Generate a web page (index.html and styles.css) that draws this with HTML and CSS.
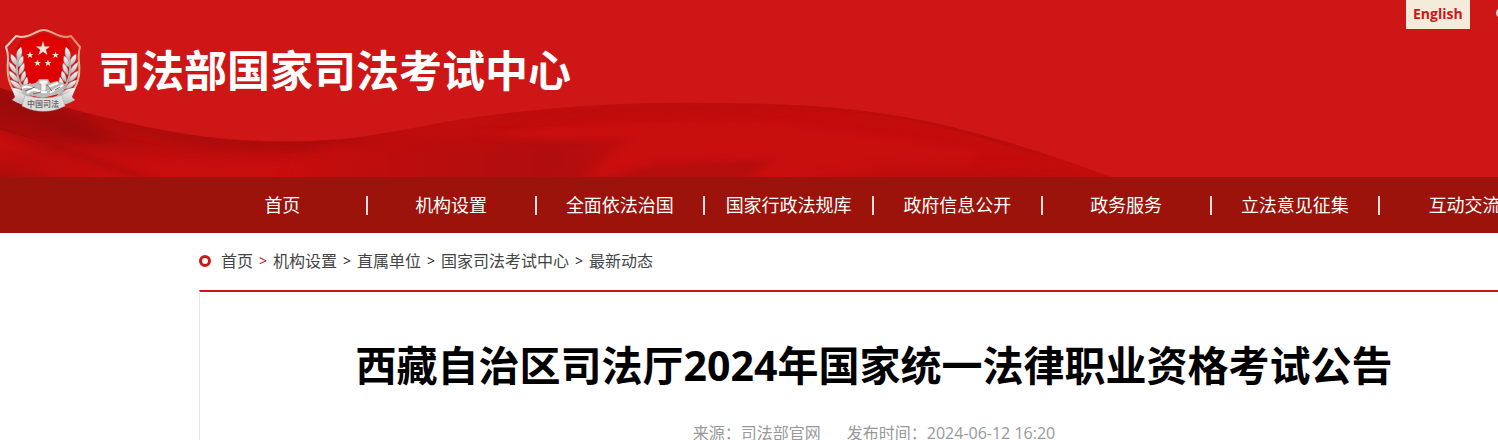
FILE: index.html
```html
<!DOCTYPE html>
<html lang="zh-CN">
  <head>
    <meta charset="UTF-8" />
    <meta name="viewport" content="width=device-width, initial-scale=1.0" />
    <title>西藏自治区司法厅2024年国家统一法律职业资格考试公告</title>
    <link rel="stylesheet" href="styles.css">
  </head>
  <body>
    <div class="page">
      <header class="header">
        <!-- ribbon background -->
        <svg class="header-bg" viewBox="0 0 1748 177" preserveAspectRatio="xMinYMax slice" aria-hidden="true">
          <defs>
            <linearGradient id="silk" gradientUnits="userSpaceOnUse" x1="0" y1="0" x2="1110" y2="0">
              <stop offset="0" stop-color="#a90c0c" />
              <stop offset="0.06" stop-color="#b40d0d" />
              <stop offset="0.16" stop-color="#bd0d0d" />
              <stop offset="0.28" stop-color="#b60d0d" />
              <stop offset="0.4" stop-color="#c00d0d" />
              <stop offset="0.55" stop-color="#c30c0c" />
              <stop offset="1" stop-color="#c40c0c" />
            </linearGradient>
            <linearGradient id="corner" x1="0" y1="0" x2="1" y2="0.5">
              <stop offset="0" stop-color="#cb0d0d" />
              <stop offset="0.4" stop-color="#bd0d0d" />
              <stop offset="1" stop-color="#c90d0d" />
            </linearGradient>
            <linearGradient id="fold" x1="0" y1="0" x2="1" y2="0">
              <stop offset="0" stop-color="#c40d0d" />
              <stop offset="0.4" stop-color="#b90d0d" />
              <stop offset="0.8" stop-color="#b10d0d" />
              <stop offset="1" stop-color="#bb0d0d" />
            </linearGradient>
            <linearGradient id="shade" x1="0" y1="0" x2="0" y2="1">
              <stop offset="0" stop-color="#bd0c0c" />
              <stop offset="0.6" stop-color="#b70c0c" />
              <stop offset="1" stop-color="#c40c0c" />
            </linearGradient>
            <clipPath id="wave">
              <path d="M0 88C70 110 140 128 200 136C260 144 310 142 352 138C410 130 450 119 500 114C580 105 640 102 710 103C790 103 850 107 910 118C980 131 1050 155 1112 177H0Z" />
            </clipPath>
            <filter id="soft" filterUnits="userSpaceOnUse" x="-60" y="40" width="1300" height="200" color-interpolation-filters="sRGB">
              <feGaussianBlur stdDeviation="6 3" />
            </filter>
            <filter id="softer" filterUnits="userSpaceOnUse" x="-60" y="40" width="1300" height="200" color-interpolation-filters="sRGB">
              <feGaussianBlur stdDeviation="14 6" />
            </filter>
          </defs>
          <g clip-path="url(#wave)">
            <rect width="1120" height="177" fill="url(#silk)" />
            <path d="M-40 70L80 116L120 145L80 142L-40 102Z" fill="#9b0b0b" filter="url(#softer)" />
            <path d="M90 118C150 142 230 150 330 151L200 140Z" fill="#c20d0d" filter="url(#soft)" />
            <path d="M100 114C180 136 280 144 370 137L300 153C220 153 150 143 90 115Z" fill="#ae0c0c" filter="url(#soft)" />
            <path d="M40 142C130 158 190 158 280 156L360 152L420 200H150Z" fill="#c80d0d" filter="url(#softer)" />
            <path d="M0 130C50 144 90 159 150 180H0Z" fill="url(#corner)" />
            <path d="M-10 128C50 144 90 159 150 180" fill="none" stroke="#a60b0b" stroke-width="4" filter="url(#soft)" />
            <path d="M-30 158L70 186H-30Z" fill="#ad0c0c" filter="url(#softer)" />
            <path d="M320 150C400 141 480 138 622 138L570 195H300Z" fill="url(#fold)" filter="url(#softer)" />
            <path d="M480 136C580 121 690 121 780 123L980 150L940 200H562L630 138L560 139Z" fill="#c90e0e" filter="url(#soft)" />
            <path d="M500 113C600 104 740 103 850 109C740 112 600 112 500 122Z" fill="#bc0c0c" filter="url(#soft)" />
            <path d="M590 182L660 164L775 159L735 186H580Z" fill="#b60d0d" filter="url(#soft)" />
            <path d="M760 190L900 168L1080 172L1120 190Z" fill="#bc0c0c" filter="url(#softer)" />
            <path d="M800 105C930 109 1010 143 1080 167" fill="none" stroke="url(#shade)" stroke-width="8" />
          </g>
        </svg>
        <a class="logo" href="#">
          <svg class="emblem" viewBox="0 0 78 84" aria-hidden="true">
            <defs>
              <linearGradient id="silver" x1="0" y1="0" x2="0" y2="1">
                <stop offset="0" stop-color="#ffffff" />
                <stop offset="1" stop-color="#b4b1b1" />
              </linearGradient>
              <linearGradient id="rim" x1="0" y1="0" x2="1" y2="1">
                <stop offset="0" stop-color="#f0e2dc" />
                <stop offset="0.5" stop-color="#e8875f" />
                <stop offset="1" stop-color="#eee0d8" />
              </linearGradient>
              <g id="branch">
                <path d="M25 68C13 56 10 42 13 29" fill="none" stroke="#b9b4b2" stroke-width="2" />
                <g fill="url(#silver)" stroke="#a89c99" stroke-width="0.4">
                  <path d="M13 31C10 26 12 21 16 18C18 23 17 28 13 31Z" />
                  <path d="M12 37C7 34 5 30 6 25C11 28 13 32 12 37Z" />
                  <path d="M13 38C12 33 14 29 18 27C19 32 18 36 13 38Z" />
                  <path d="M12 45C7 43 4 38 4 33C9 36 12 40 12 45Z" />
                  <path d="M14 46C13 41 15 37 19 34C20 39 19 43 14 46Z" />
                  <path d="M14 53C8 52 4 47 4 42C9 44 13 48 14 53Z" />
                  <path d="M16 53C15 48 17 44 20 42C22 47 20 51 16 53Z" />
                  <path d="M17 60C11 60 7 56 5 51C11 52 15 55 17 60Z" />
                  <path d="M19 60C17 55 19 51 22 48C24 53 23 57 19 60Z" />
                  <path d="M22 66C16 67 10 64 7 59C14 59 18 61 22 66Z" />
                  <path d="M24 65C21 60 22 57 25 54C28 59 27 62 24 65Z" />
                </g>
              </g>
            </defs>
            <path d="M16 8C27 8 31 1 39 1C46 1 51 8 62 8L66 7L75 18C71 30 77 36 73 51C69 66 55 76 39 81C22 76 8 66 4 51C0 36 6 30 1 18L11 7Z" fill="#d51414" stroke="url(#rim)" stroke-width="2" />
            <path d="M17 11C28 11 32 5 39 5C45 5 50 11 61 11L66 20C61 30 67 37 62 49C58 61 47 65 38 68C27 65 19 60 15 49C11 37 16 30 12 20Z" fill="#df0303" stroke="#b80a08" />
            <use href="#branch" />
            <use href="#branch" transform="matrix(-1 0 0 1 77 0)" />
            <g fill="#ece6df">
              <path d="M38 12L39.600 17.500H45L40.800 20.800L42.500 26L38 22.800L33.500 26L35.200 20.800L31 17.500H36.400Z" />
              <path id="star" d="M25 22.500L25.900 25H28.500L26.400 26.500L27.200 29L25 27.500L22.800 29L23.600 26.500L21.500 25H24.100Z" />
              <use href="#star" x="25.500" />
              <use href="#star" x="7.500" y="8" />
              <use href="#star" x="18" y="8" />
            </g>
            <!-- pillar and gears -->
            <path d="M16 56C23 54 27 56 32 53L34 50H43L45 54L52 52L60 55L57 64L38 69L18 65Z" fill="#bdbaba" />
            <path d="M34 51H43V55H41V62H36V55H34Z" fill="#f5f3f2" stroke="#8b8585" stroke-width="0.500" />
            <path d="M17 59C24 55 28 61 33 61M22 64C30 57 34 65 42 63M43 58L53 54M45 64C49 60 54 59 58 56" fill="none" stroke="#fff" stroke-width="2" />
            <path d="M20 62L30 58M42 56L47 62M28 65L36 63M50 61L55 58" fill="none" stroke="#6d6665" stroke-width="1" />
            <!-- ribbon -->
            <path d="M6 58C13 65 22 67 29 68L25 77C17 76 12 74 7 71L10 68Z" fill="url(#silver)" />
            <path d="M71 58C64 65 55 67 48 68L52 77C60 76 65 74 70 71L67 68Z" fill="url(#silver)" />
            <path d="M20 66C31 70 46 70 57 66L60 77C47 84 30 84 17 77Z" fill="#dededc" stroke="#aaa6a4" stroke-width="0.500" />
            <text class="emblem-text" x="38" y="78" text-anchor="middle">中国司法</text>
          </svg>
          <span class="logo-text">司法部国家司法考试中心</span>
        </a>
        <div class="tools">
          <a class="lang" href="#">English</a>
          <svg class="tool-icon" viewBox="0 0 14 14" aria-hidden="true">
            <circle cx="5" cy="6" r="4" fill="none" stroke="#f3d4cf" stroke-width="2" />
            <path d="M8 9L12 13" stroke="#f3d4cf" stroke-width="2" />
          </svg>
        </div>
      </header>

      <nav class="nav">
        <ul class="nav-list">
          <li><a href="#">首页</a></li>
          <li><a href="#">机构设置</a></li>
          <li><a href="#">全面依法治国</a></li>
          <li><a href="#">国家行政法规库</a></li>
          <li><a href="#">政府信息公开</a></li>
          <li><a href="#">政务服务</a></li>
          <li><a href="#">立法意见征集</a></li>
          <li><a href="#">互动交流</a></li>
        </ul>
      </nav>

      <main class="container">
        <div class="crumbs">
          <span class="dot"></span>
          <a href="#">首页</a>
          <span class="sep sep-first">&gt;</span>
          <a href="#">机构设置</a>
          <span class="sep">&gt;</span>
          <a href="#">直属单位</a>
          <span class="sep">&gt;</span>
          <a href="#">国家司法考试中心</a>
          <span class="sep">&gt;</span>
          <a href="#">最新动态</a>
        </div>
        <article class="article">
          <h1 class="article-title">西藏自治区司法厅2024年国家统一法律职业资格考试公告</h1>
          <div class="article-meta">
            <span>来源：司法部官网</span>
            <span>发布时间：2024-06-12 16:20</span>
          </div>
        </article>
      </main>
    </div>
  </body>
</html>
```
FILE: styles.css
```css
* {
  box-sizing: border-box;
}
body {
  margin: 0;
  background-color: #fff;
  font-family: "Open Sans", "Noto Sans CJK SC", sans-serif;
  font-size: 16px;
  overflow: hidden;
}
a {
  color: inherit;
  text-decoration: none;
}
.page {
  min-width: 1748px;
}
/* Header */
.header {
  position: relative;
  display: flex;
  justify-content: space-between;
  align-items: flex-start;
  height: 177px;
  background-color: #cf1616;
}
.header-bg {
  position: absolute;
  left: 0;
  top: 0;
  width: 100%;
  height: 100%;
}
.logo {
  position: relative;
  display: flex;
  align-items: center;
  gap: 15px;
  padding: 29px 0 0 5px;
  color: #fff;
}
.emblem {
  width: 78px;
  height: 84px;
}
.emblem-text {
  font-family: "Noto Sans CJK SC", sans-serif;
  font-size: 8px;
  font-weight: bold;
  fill: #77716f;
}
.logo-text {
  font-size: 43px;
  font-weight: bold;
  line-height: 56px;
}
.tools {
  position: relative;
  display: flex;
  width: 342px;
  gap: 26px;
}
.lang {
  padding: 0 7px 2px;
  background-color: #f5ebda;
  color: #cf1616;
  font-size: 14px;
  font-weight: bold;
  line-height: 27px;
}
.tool-icon {
  width: 14px;
  height: 14px;
  margin-top: 7px;
}
/* Navigation */
.nav {
  background-color: #9b130a;
}
.nav-list {
  display: grid;
  grid-template-columns: repeat(8, 1fr);
  width: 1350px;
  margin: 0 auto;
  padding: 0;
  list-style: none;
}
.nav-list li {
  display: flex;
  align-items: center;
  height: 56px;
  color: #fff;
  font-size: 18px;
}
.nav-list a {
  flex: 1;
  padding-bottom: 2px;
  text-align: center;
  white-space: nowrap;
}
.nav-list li::after {
  content: "";
  width: 2px;
  height: 19px;
  background-color: #f0dcda;
}
.nav-list li:last-child::after {
  display: none;
}
/* Content */
.container {
  width: 1350px;
  margin: 0 auto;
}
.crumbs {
  display: flex;
  align-items: center;
  height: 57px;
  padding-bottom: 2px;
  color: #444;
}
.crumbs a {
  padding-bottom: 2px;
}
.dot {
  width: 12px;
  height: 12px;
  margin-right: 10px;
  border: 3px solid #cf1616;
  border-radius: 50%;
}
.sep {
  width: 20px;
  color: #222;
  font-size: 14px;
  text-align: center;
}
.sep-first {
  color: #b01010;
}
.article {
  border: 1px solid #e6e6e6;
  border-top: 2px solid #cf1616;
  padding: 43px 20px 40px;
  text-align: center;
}
.article-title {
  margin: 0;
  color: #000;
  font-size: 41px;
  font-weight: bold;
  line-height: 60px;
}
.article-meta {
  display: flex;
  justify-content: center;
  gap: 26px;
  margin-top: 26px;
  color: #999;
  line-height: 24px;
}
```
